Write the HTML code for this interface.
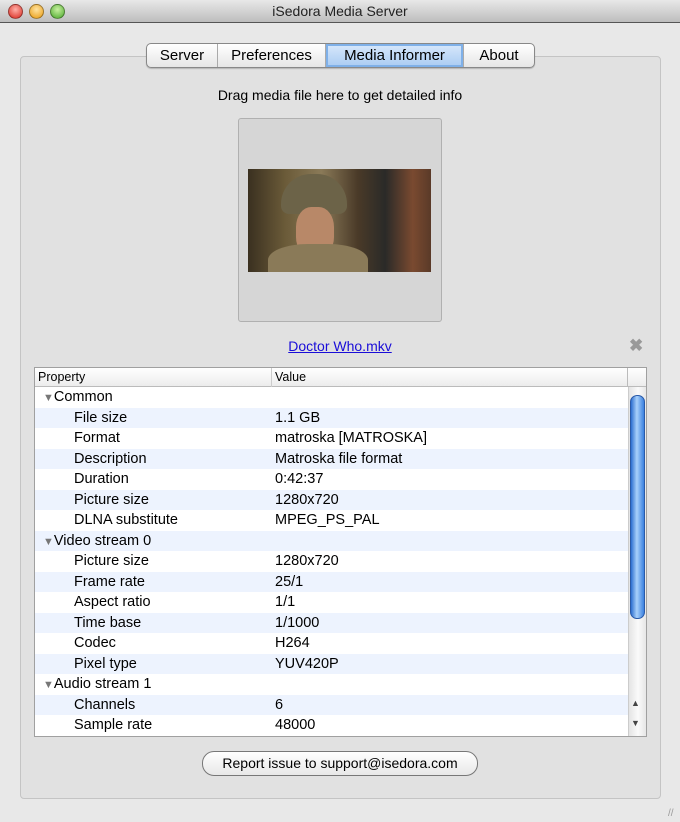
<!DOCTYPE html><html><head><style>
body{margin:0;width:680px;height:822px;background:#e8e8e8;font-family:"Liberation Sans",sans-serif;position:relative;overflow:hidden;font-size:14px;color:#000}
.a{position:absolute}
.title{left:0;top:0;width:680px;height:22px;background:linear-gradient(#e8e8e8,#bdbdbd);border-bottom:1px solid #555;text-align:center;line-height:23px;font-size:14px;color:#222}
.dot{width:13px;height:13px;border-radius:50%;top:4px;border:1px solid rgba(0,0,0,.35)}
.grp{left:20px;top:56px;width:639px;height:741px;background:#e1e1e1;border:1px solid #c4c4c4;border-radius:4px}
.tabs{left:146px;top:43px;height:23px;display:flex;border:1px solid #888;border-radius:5px;overflow:hidden;background:linear-gradient(#fff,#e6e6e6);box-shadow:0 1px 1px rgba(0,0,0,.2)}
.tabs div{line-height:23px;font-size:15px;border-right:1px solid #aaa;text-align:center;box-sizing:border-box}
.tabs .s{background:linear-gradient(#d8e8fb,#a9cbf2);box-shadow:inset 0 0 0 2px #7fb0e8}
.tbl{left:34px;top:367px;width:611px;height:368px;background:#fff;border:1px solid #a0a0a0;overflow:hidden}
.row{position:absolute;left:0;width:593px;height:20.5px;line-height:20.5px;font-size:14.5px}
.row span{position:absolute}
</style></head><body>
<div class="a title">iSedora Media Server</div>
<div class="a dot" style="left:8px;background:radial-gradient(circle at 50% 35%,#ffb0a8,#d8261c)"></div>
<div class="a dot" style="left:29px;background:radial-gradient(circle at 50% 35%,#ffe3a0,#e89a10)"></div>
<div class="a dot" style="left:50px;background:radial-gradient(circle at 50% 35%,#c8f0a0,#4aa82a)"></div>
<div class="a grp"></div>
<div class="a tabs"><div style="width:71px">Server</div><div style="width:108px">Preferences</div><div class="s" style="width:138px">Media Informer</div><div style="border:0;width:70px">About</div></div>
<div class="a" style="left:0;width:680px;top:87px;text-align:center;font-size:14px">Drag media file here to get detailed info</div>
<div class="a" style="left:238px;top:118px;width:202px;height:202px;background:#d6d6d6;border:1px solid #b0b0b0;border-radius:3px"></div>
<div class="a" style="left:248px;top:169px;width:183px;height:103px;overflow:hidden;background:linear-gradient(90deg,#3a3020 0%,#6a5a38 20%,#8a7a58 40%,#4a3a28 60%,#2a2a28 75%,#7a4a30 90%,#5a3a28 100%)">
<div class="a" style="left:33px;top:5px;width:66px;height:40px;border-radius:30px 30px 8px 8px;background:#6c6348"></div>
<div class="a" style="left:48px;top:38px;width:38px;height:50px;border-radius:40%;background:#b88868"></div>
<div class="a" style="left:20px;top:75px;width:100px;height:40px;border-radius:40% 40% 0 0;background:#8a7a58"></div>
</div>
<div class="a" style="left:0;width:680px;top:338px;text-align:center;font-size:14px;color:#1a0dd8;text-decoration:underline">Doctor Who.mkv</div>
<div class="a" style="left:629px;top:336px;font-size:17px;color:#999;font-weight:bold">✖</div>
<div class="a tbl">
<div class="a" style="left:0;top:0;width:611px;height:18px;background:linear-gradient(#fff,#ececec);border-bottom:1px solid #bbb;font-size:12.5px;line-height:18px"><span class="a" style="left:3px">Property</span><span class="a" style="left:240px">Value</span><span class="a" style="left:592px;top:0;height:18px;border-left:1px solid #bbb;width:1px"></span></div>
<div class="a" style="left:236px;top:0;width:1px;height:368px;background:#ccc"></div>
<div id="rows"></div>
<div class="a" style="left:593px;top:19px;width:18px;height:349px;background:linear-gradient(90deg,#e4e4e4,#fafafa,#e4e4e4);border-left:1px solid #ccc"></div>
<div class="a" style="left:595px;top:27px;width:13px;height:222px;border-radius:7px;background:linear-gradient(90deg,#2d6fd0,#a8d0fa 45%,#3a80e0);border:1px solid #2a5aa8"></div>
<div class="a" style="left:596px;top:330px;font-size:9px;color:#444">▲</div>
<div class="a" style="left:596px;top:350px;font-size:9px;color:#444">▼</div>
</div>
<div class="a" style="left:202px;top:751px;width:274px;height:23px;border:1px solid #777;border-radius:12px;background:linear-gradient(#fff,#e8e8e8);text-align:center;line-height:23px;font-size:14px">Report issue to support@isedora.com</div>
<div class="a" style="left:668px;top:808px;font-size:10px;color:#999">//</div>
<script>
var d=[["▼Common",""],["File size","1.1 GB"],["Format","matroska [MATROSKA]"],["Description","Matroska file format"],["Duration","0:42:37"],["Picture size","1280x720"],["DLNA substitute","MPEG_PS_PAL"],["▼Video stream 0",""],["Picture size","1280x720"],["Frame rate","25/1"],["Aspect ratio","1/1"],["Time base","1/1000"],["Codec","H264"],["Pixel type","YUV420P"],["▼Audio stream 1",""],["Channels","6"],["Sample rate","48000"]];
var h="";d.forEach(function(r,i){var g=r[0][0]=="▼";h+='<div class="row" style="top:'+(19+i*20.5)+'px;background:'+(i%2?'#edf3fe':'#fff')+'"><span style="left:'+(g?8:39)+'px">'+(g?'<span style="position:static;color:#777;font-size:11px">▼</span>'+r[0].slice(1):r[0])+'</span><span style="left:240px">'+r[1]+'</span></div>'});
document.getElementById("rows").innerHTML=h;
</script>
</body></html>
